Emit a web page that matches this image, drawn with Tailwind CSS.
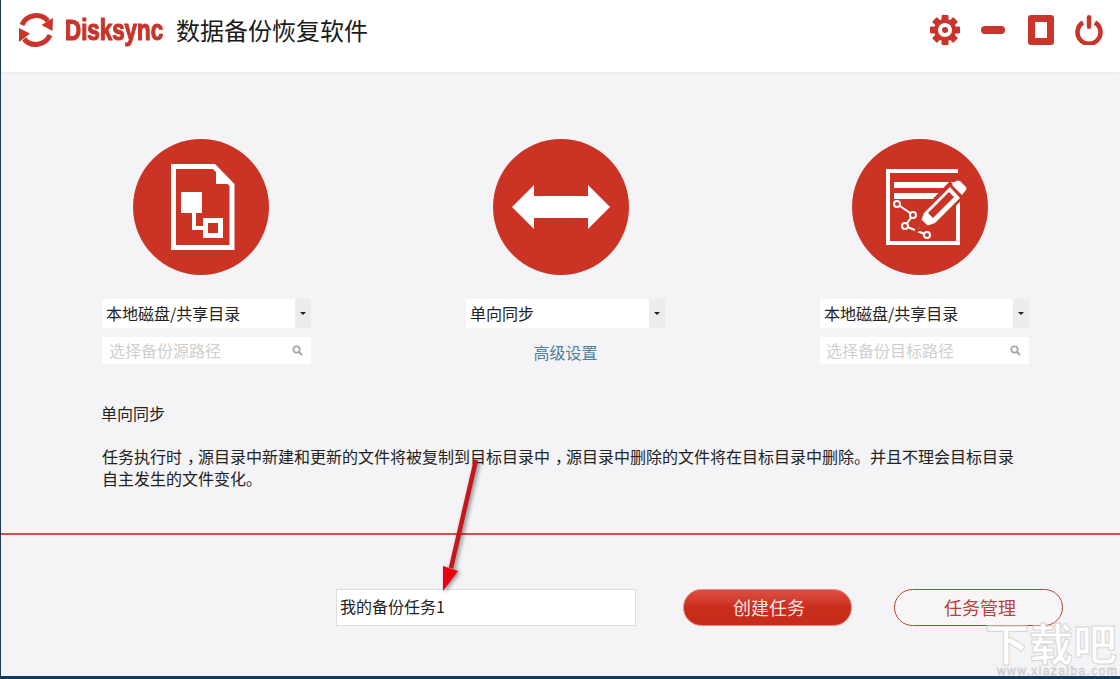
<!DOCTYPE html>
<html lang="zh-CN">
<head>
  <meta charset="UTF-8">
  <meta name="viewport" content="width=device-width, initial-scale=1.0">
  <title>Disksync 数据备份恢复软件</title>
  <script src="https://cdn.jsdelivr.net/npm/@tailwindcss/browser@4"></script>
</head>
<body class="overflow-hidden bg-[#f4f3f5] font-['Noto_Sans_CJK_SC','Liberation_Sans',sans-serif] text-[#222]">
<div class="relative flex h-[679px] w-[1120px] flex-col overflow-hidden border-l border-[#1d3a4f]">

  <!-- header -->
  <header class="flex h-[72px] shrink-0 items-center bg-white pb-[12px] pl-[16px] pr-[17px] shadow-[0_1px_3px_rgba(0,0,0,0.06)]">
    <svg class="h-[38px] w-[38px]" viewBox="0 0 38 38">
      <path d="M5 14 A15.500 15.500 0 0 1 31 10" fill="none" stroke="#c9352a" stroke-width="5"/>
      <path d="M36 7 L35.500 20 L24.500 14 Z" fill="#c9352a"/>
      <path d="M33 24 A15.500 15.500 0 0 1 7 28" fill="none" stroke="#c9352a" stroke-width="5"/>
      <path d="M2 17 L13 22.500 L2 31 Z" fill="#c9352a"/>
    </svg>
    <span class="ml-[10px] w-[98px] whitespace-nowrap"><span class="inline-block origin-left scale-x-[0.77] font-['Liberation_Sans',sans-serif] text-[29px] leading-none font-bold text-[#c9352a] [-webkit-text-stroke:1.200px_#c9352a]">Disksync</span></span>
    <span class="ml-[13px] text-[24px] leading-none text-[#1a1a1a]">数据备份恢复软件</span>
    <div class="ml-auto flex items-center">
      <svg class="h-[30px] w-[30px]" viewBox="0 0 30 30">
        <g fill="#c9352a">
          <rect x="11.500" y="0" width="7" height="30" rx="1"/>
          <rect x="11.500" y="0" width="7" height="30" rx="1" transform="rotate(45 15 15)"/>
          <rect x="11.500" y="0" width="7" height="30" rx="1" transform="rotate(90 15 15)"/>
          <rect x="11.500" y="0" width="7" height="30" rx="1" transform="rotate(135 15 15)"/>
          <circle cx="15" cy="15" r="11"/>
        </g>
        <circle cx="15" cy="15" r="7" fill="#fff"/>
        <circle cx="15" cy="15" r="3" fill="#c9352a"/>
      </svg>
      <div class="ml-[21px] h-[8px] w-[24px] rounded-full bg-[#c9352a]"></div>
      <div class="ml-[23px] h-[30px] w-[26px] rounded-[3px] border-[7px] border-[#c9352a] bg-white"></div>
      <svg class="ml-[21px] h-[30px] w-[28px]" viewBox="0 0 28 30">
        <path d="M8 7.500 A11.500 11.500 0 1 0 20 7.500" fill="none" stroke="#c9352a" stroke-width="4.500"/>
        <rect x="11.800" y="0" width="4.400" height="14" rx="2.200" fill="#c9352a"/>
      </svg>
    </div>
  </header>

  <main class="flex min-h-0 flex-1 flex-col">
    <!-- three columns -->
    <div class="flex gap-[155px] pl-[101px] pt-[67px]">
      <div class="w-[209px]">
        <div class="ml-[31px] flex h-[136px] w-[136px] items-center justify-center rounded-full bg-[#cb3324]">
          <svg class="ml-[4px] h-[86px] w-[64px]" viewBox="0 0 64 86">
            <path d="M2.500 2.500 H43 L61 21 V83.500 H2.500 Z" fill="none" stroke="#fff" stroke-width="5"/>
            <path d="M45 5 L59 20 H45 Z" fill="#fff"/>
            <rect x="10" y="28" width="21" height="21" fill="#fff"/>
            <path d="M23 48 V64 H34" fill="none" stroke="#fff" stroke-width="4"/>
            <rect x="34.500" y="56.500" width="15" height="15" fill="none" stroke="#fff" stroke-width="5"/>
          </svg>
        </div>
        <div class="mt-[24px] flex h-[29px] items-center bg-white pl-[4px] text-[16px] leading-none">
          <span class="flex-1 pb-[2px]">本地磁盘/共享目录</span>
          <span class="flex h-full w-[16px] items-center justify-center bg-[#ecebed]"><span class="h-0 w-0 border-x-[3px] border-t-[3px] border-x-transparent border-t-[#222]"></span></span>
        </div>
        <div class="mt-[9px] flex h-[27px] items-center bg-white pl-[7px] pr-[8px] text-[16px] leading-none text-[#cfcfcf]">
          <span class="flex-1 pb-[2px]">选择备份源路径</span>
          <svg class="h-[11px] w-[11px]" viewBox="0 0 11 11"><circle cx="4.500" cy="4.500" r="3.200" fill="none" stroke="#a9a9a9" stroke-width="1.800"/><path d="M7 7 L10 10" stroke="#a9a9a9" stroke-width="2"/></svg>
        </div>
      </div>

      <div class="w-[199px]">
        <div class="ml-[27px] flex h-[136px] w-[136px] items-center justify-center rounded-full bg-[#cb3324]">
          <svg class="h-[44px] w-[98px]" viewBox="0 0 98 44">
            <path d="M0 22 L22 0 V11 H76 V0 L98 22 L76 44 V33 H22 V44 Z" fill="#fff"/>
          </svg>
        </div>
        <div class="mt-[24px] flex h-[29px] items-center bg-white pl-[4px] text-[16px] leading-none">
          <span class="flex-1 pb-[2px]">单向同步</span>
          <span class="flex h-full w-[16px] items-center justify-center bg-[#ecebed]"><span class="h-0 w-0 border-x-[3px] border-t-[3px] border-x-transparent border-t-[#222]"></span></span>
        </div>
        <a class="mt-[9px] flex h-[27px] items-center justify-center pt-[2px] text-[16px] leading-none text-[#4d7f9e]">高级设置</a>
      </div>

      <div class="w-[209px]">
        <div class="ml-[32px] flex h-[136px] w-[136px] items-center justify-center rounded-full bg-[#cb3324]">
          <svg class="ml-[16px] h-[76px] w-[84px]" viewBox="0 0 84 76">
            <path d="M72 2 H2 V74 H72 V30" fill="none" stroke="#fff" stroke-width="4"/>
            <rect x="8" y="13" width="61" height="6" fill="#fff"/>
            <rect x="8" y="24" width="49" height="6" fill="#fff"/>
            <path d="M11 35 L27 46 L19 57 L41 66" fill="none" stroke="#fff" stroke-width="2"/>
            <circle cx="11" cy="35" r="3" fill="#cb3324" stroke="#fff" stroke-width="2"/>
            <circle cx="27" cy="46" r="3" fill="#cb3324" stroke="#fff" stroke-width="2"/>
            <circle cx="19" cy="57" r="3" fill="#cb3324" stroke="#fff" stroke-width="2"/>
            <circle cx="41" cy="66" r="3" fill="#cb3324" stroke="#fff" stroke-width="2"/>
            <path d="M31 61 L37 43 L64 15 L76 28 L50 54 Z" fill="#cb3324" stroke="#cb3324" stroke-width="4"/>
            <path d="M32 60 L38 44 L64 18 L74 29 L49 54 Z" fill="#fff"/>
            <path d="M42 44 L47 49 L68 28 L63 23 Z" fill="#cb3324"/>
            <path d="M66 16 L70 12 Q72 11 74 12 L80 18 Q81 20 80 21 L76 26 Z" fill="#fff"/>
            <path d="M32 60 L35 50 L42 57 Z" fill="#cb3324"/>
          </svg>
        </div>
        <div class="mt-[24px] flex h-[29px] items-center bg-white pl-[4px] text-[16px] leading-none">
          <span class="flex-1 pb-[2px]">本地磁盘/共享目录</span>
          <span class="flex h-full w-[16px] items-center justify-center bg-[#ecebed]"><span class="h-0 w-0 border-x-[3px] border-t-[3px] border-x-transparent border-t-[#222]"></span></span>
        </div>
        <div class="mt-[9px] flex h-[27px] items-center bg-white pl-[6px] pr-[8px] text-[16px] leading-none text-[#cfcfcf]">
          <span class="flex-1 pb-[2px]">选择备份目标路径</span>
          <svg class="h-[11px] w-[11px]" viewBox="0 0 11 11"><circle cx="4.500" cy="4.500" r="3.200" fill="none" stroke="#a9a9a9" stroke-width="1.800"/><path d="M7 7 L10 10" stroke="#a9a9a9" stroke-width="2"/></svg>
        </div>
      </div>
    </div>

    <!-- description -->
    <div class="pl-[100px] pt-[38px] text-[16px] leading-[22px]">
      <p>单向同步</p>
      <p class="mt-[21px] w-[920px] pl-px">
        <span class="block whitespace-nowrap">任务执行时<span class="ml-[5px] tracking-[-5px]">，</span>源目录中新建和更新的文件将被复制到目标目录中<span class="ml-[5px] tracking-[-5px]">，</span>源目录中删除的文件将在目标目录中删除。并且不理会目标目录</span>
        <span class="block whitespace-nowrap">自主发生的文件变化。</span>
      </p>
    </div>

    <div class="mt-[44px] h-[2px] bg-[#cf5048]"></div>

    <!-- task name and actions -->
    <div class="flex items-center pl-[335px] pt-[54px]">
      <div class="flex h-[37px] w-[300px] items-center border border-[#dcdcdc] bg-white pb-[3px] pl-[3px] text-[16px] leading-none">我的备份任务1</div>
      <button class="ml-[47px] h-[37px] w-[169px] rounded-full border border-[#e8877c] bg-gradient-to-b from-[#dd4f42] via-[#c92d1c] to-[#c52c1a] pb-[2px] pl-[3px] text-[18px] leading-none text-[#fbe6e2]">创建任务</button>
      <button class="ml-[42px] h-[37px] w-[169px] rounded-full border border-[#b8433a] bg-[#f7f5f6] pb-[2px] pl-[3px] text-[18px] leading-none text-[#b8433a]">任务管理</button>
    </div>
  </main>

  <footer class="h-[3px] shrink-0 bg-[#0f3a5c]"></footer>

  <!-- annotation arrow -->
  <svg class="pointer-events-none absolute left-[-1px] top-0 h-[679px] w-[1120px] drop-shadow-[2px_1px_2px_rgba(0,0,0,0.45)]" viewBox="0 0 1120 679">
    <path d="M476 460 L451 568" fill="none" stroke="#c4161c" stroke-width="4.500"/>
    <path d="M443 591 L443 566 L458 571 Z" fill="#e8000f"/>
  </svg>

  <!-- watermark -->
  <div class="pointer-events-none absolute left-[984px] top-[620px] text-white">
    <div class="whitespace-nowrap text-[44px] leading-[44px] font-bold [-webkit-text-stroke:1px_#d6d6d6]">下载吧</div>
    <div class="ml-[12px] mt-px whitespace-nowrap font-['Liberation_Sans',sans-serif] text-[12px] leading-[12px] tracking-[1.400px] text-[#e6e6e6] [-webkit-text-stroke:0.4px_#bdbdbd]">www.xiazaiba.com</div>
  </div>
</div>
</body>
</html>
